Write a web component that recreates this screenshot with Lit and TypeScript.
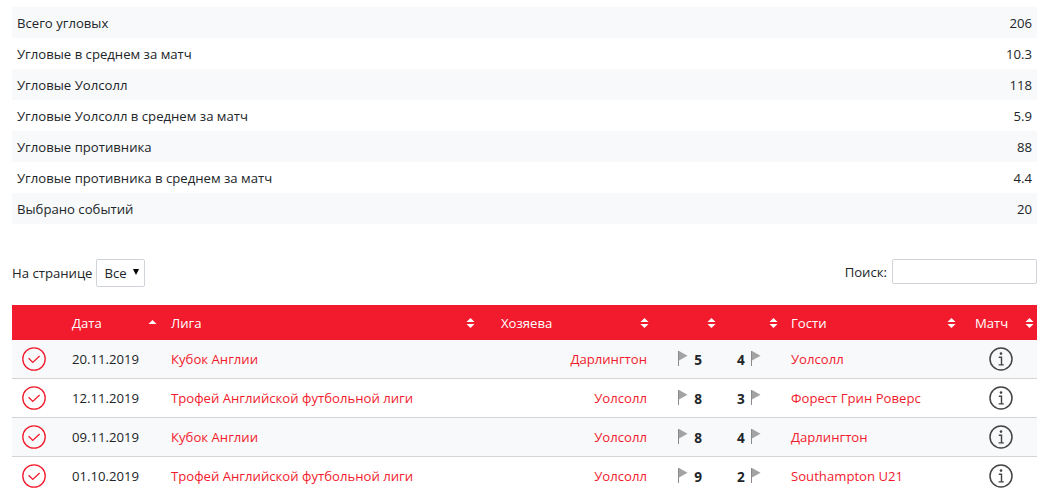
import { LitElement, html, css, svg } from "lit";
import { customElement } from "lit/decorators.js";

const stats = [
  ["Всего угловых", "206"],
  ["Угловые в среднем за матч", "10.3"],
  ["Угловые Уолсолл", "118"],
  ["Угловые Уолсолл в среднем за матч", "5.9"],
  ["Угловые противника", "88"],
  ["Угловые противника в среднем за матч", "4.4"],
  ["Выбрано событий", "20"],
];
const rows = [
  ["20.11.2019", "Кубок Англии", "Дарлингтон", "5", "4", "Уолсолл"],
  ["12.11.2019", "Трофей Английской футбольной лиги", "Уолсолл", "8", "3", "Форест Грин Роверс"],
  ["09.11.2019", "Кубок Англии", "Уолсолл", "8", "4", "Дарлингтон"],
  ["01.10.2019", "Трофей Английской футбольной лиги", "Уолсолл", "9", "2", "Southampton U21"],
];

const check = svg`<svg class="ico" width="24" height="24" viewBox="0 0 24 24" fill="none" stroke="#f21b2d"><circle cx="12" cy="12" r="11.2" stroke-width="1.3"/><path d="M6.6 11.2l4.2 4.2L17.6 9" stroke-width="1.3"/></svg>`;
const info = svg`<svg class="ico" width="24" height="24" viewBox="0 0 24 24" fill="none" stroke="#444"><circle cx="12" cy="12" r="11" stroke-width="1.5"/><circle cx="12" cy="6.6" r="1.3" fill="#444" stroke="none"/><path d="M9.8 10.3h2.7v7.4M9.6 17.9h5.2" stroke-width="1.4"/></svg>`;
const flag = svg`<svg class="flag" width="10" height="15" viewBox="0 0 10 15"><path d="M0 0h1v15H0z" fill="#8a8a8a"/><path d="M1 0L9.5 4.8 1 9.4z" fill="#a3a3a3"/></svg>`;
const sortBoth = svg`<svg class="sort" width="9" height="10" viewBox="0 0 9 10" fill="#fff"><path d="M4.5 0L8.5 4H.5zM4.5 10L.5 6h8z"/></svg>`;
const sortUp = svg`<svg class="sort" width="9" height="10" viewBox="0 0 9 10" fill="#fff"><path d="M4.5 2L8.5 6H.5z"/></svg>`;

@customElement("app-root")
export class AppRoot extends LitElement {
  static styles = css`
    :host {
      display: block;
      padding: 7px 21px 0 12px;
      height: 483px;
      overflow: hidden;
      font-family: "Open Sans", "Noto Sans", sans-serif;
      font-size: 13.15px;
      color: #212529;
      background: #fff;
    }
    .stats { display: flex; flex-direction: column; }
    .stat {
      display: flex;
      justify-content: space-between;
      align-items: center;
      height: 31px;
      padding: 0 5px;
    }
    .stat:nth-child(odd) { background: #f8f9fa; }
    .controls {
      display: flex;
      justify-content: space-between;
      align-items: flex-start;
      margin-top: 35px;
      height: 28px;
    }
    .group { display: flex; align-items: center; gap: 3px; }
    .group.search { gap: 5px; }
    .select {
      display: flex;
      align-items: center;
      gap: 6px;
      box-sizing: border-box;
      height: 28px;
      width: 49px;
      padding-left: 8px;
      border: 1px solid #ced4da;
      border-radius: 2px;
    }
    .caret {
      width: 0; height: 0;
      margin-top: -3px;
      border-left: 3.5px solid transparent;
      border-right: 3.5px solid transparent;
      border-top: 6px solid #000;
    }
    .input {
      box-sizing: border-box;
      width: 145px;
      height: 25px;
      border: 1px solid #ced4da;
      border-radius: 2px;
    }
    table {
      width: 1025px;
      margin-top: 18px;
      table-layout: fixed;
      border-collapse: collapse;
    }
    th {
      height: 35px;
      padding: 0 5px;
      background: #f21b2d;
      color: #fff;
      font-weight: 400;
      text-align: left;
      position: relative;
    }
    th .sort { position: absolute; right: 3px; top: 13px; }
    th.date .sort { right: 9px; }
    th.league .sort { right: 21px; }
    th.away-score .sort { right: 8.5px; }
    td {
      height: 38px;
      padding: 0 5px;
      border-bottom: 1px solid #d2d4d6;
    }
    tbody tr:nth-child(odd) td { background: #f8f9fa; }
    .red { color: #f21b2d; }
    .right { text-align: right; }
    .ico { display: block; }
    .center .ico { margin-left: 5px; }
    .info .ico { margin-left: 25px; }
    th.match { padding-left: 16px; }
    .score { font-weight: 700; font-size: 13.6px; }
    .pair { display: flex; align-items: center; gap: 6px; }
    .pair.home { justify-content: flex-end; padding-right: 12px; }
    .pair.away { padding-left: 13px; }
    .flag { margin-top: -1px; }
  `;

  render() {
    return html`
      <div class="stats">
        ${stats.map(([k, v]) => html`<div class="stat"><span>${k}</span><span>${v}</span></div>`)}
      </div>
      <div class="controls">
        <div class="group">
          <span>На странице</span>
          <div class="select"><span>Все</span><span class="caret"></span></div>
        </div>
        <div class="group search"><span>Поиск:</span><div class="input"></div></div>
      </div>
      <table>
        <colgroup>
          <col style="width:55px" /><col style="width:99px" /><col style="width:330px" />
          <col style="width:156px" /><col style="width:67px" /><col style="width:67px" />
          <col style="width:173px" /><col style="width:78px" />
        </colgroup>
        <thead>
          <tr>
            <th></th>
            <th class="date">Дата${sortUp}</th>
            <th class="league">Лига${sortBoth}</th>
            <th>Хозяева${sortBoth}</th>
            <th>${sortBoth}</th>
            <th class="away-score">${sortBoth}</th>
            <th>Гости${sortBoth}</th>
            <th class="match">Матч${sortBoth}</th>
          </tr>
        </thead>
        <tbody>
          ${rows.map(
            (r) => html`<tr>
              <td class="center">${check}</td>
              <td>${r[0]}</td>
              <td class="red">${r[1]}</td>
              <td class="red right">${r[2]}</td>
              <td><div class="pair home">${flag}<span class="score">${r[3]}</span></div></td>
              <td><div class="pair away"><span class="score">${r[4]}</span>${flag}</div></td>
              <td class="red">${r[5]}</td>
              <td class="info">${info}</td>
            </tr>`
          )}
        </tbody>
      </table>
    `;
  }
}
